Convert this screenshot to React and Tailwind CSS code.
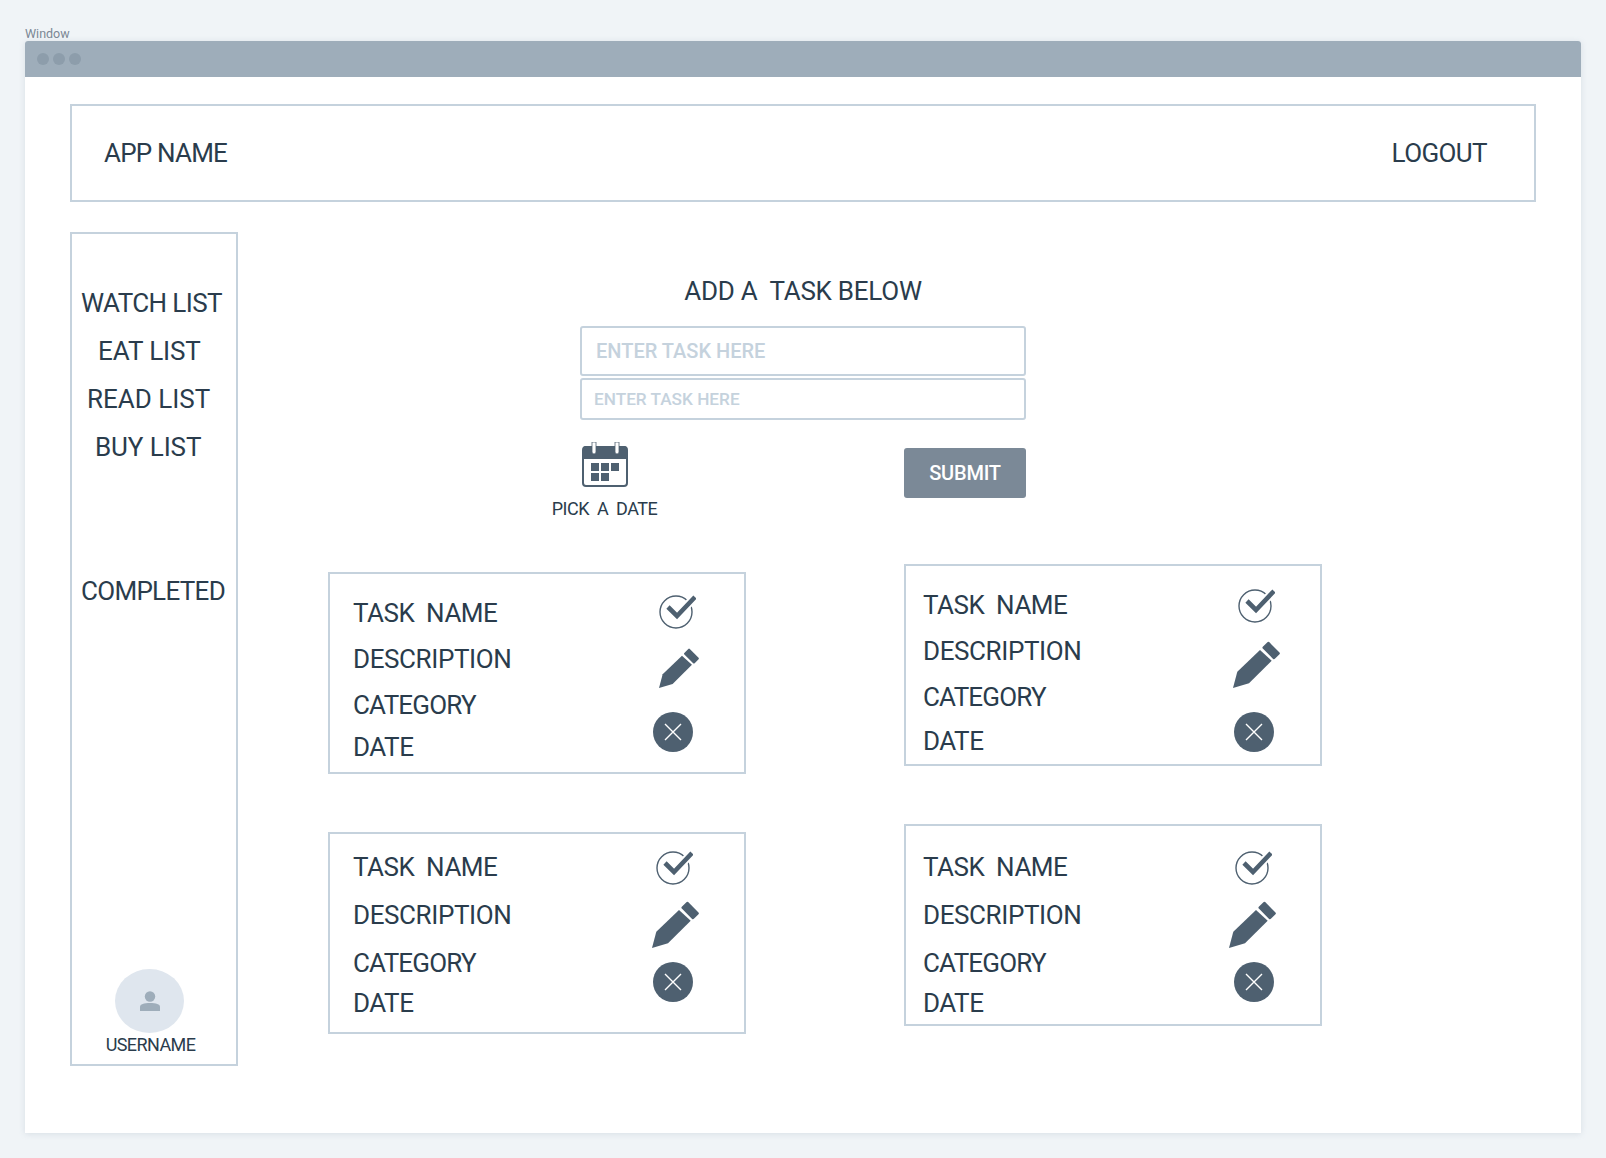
function Check({ className }) {
  return (
    <svg viewBox="0 0 37 34" className={className} fill="none">
      <circle cx="17" cy="17" r="16" stroke="#4e6070" strokeWidth="1.4" />
      <path d="M9 12 L18 21 L36 2" stroke="#fff" strokeWidth="8.5" />
      <path d="M9 12 L18 21 L36 2" stroke="#4e6070" strokeWidth="4.6" />
    </svg>
  );
}

function Pencil({ className }) {
  return (
    <svg viewBox="0 0 47 47" className={className} fill="#4e6070">
      <path d="M0 47 L4.3 30.7 L27 9 L38.7 19.7 L16 42.3 Z" />
      <path d="M35.3 2 L45.6 12.3 L41 17 L30.7 6.7 Z" stroke="#4e6070" strokeWidth="2.5" strokeLinejoin="round" />
    </svg>
  );
}

function Close({ className }) {
  return (
    <svg viewBox="0 0 40 40" className={className}>
      <circle cx="20" cy="20" r="20" fill="#4e6070" />
      <path d="M12 12 L28 28 M28 12 L12 28" stroke="#fff" strokeWidth="1.4" />
    </svg>
  );
}

function Calendar({ className }) {
  return (
    <svg viewBox="0 0 46 45" className={className}>
      <rect x="1" y="5" width="44" height="39" rx="3" fill="#fff" stroke="#4e6070" strokeWidth="2" />
      <path d="M1 17 V7 a3 3 0 0 1 3-3 H42 a3 3 0 0 1 3 3 V17 Z" fill="#4e6070" />
      <path d="M10 0 V10 a2 2 0 0 0 4 0 V0 Z M33 0 V10 a2 2 0 0 0 4 0 V0 Z" fill="#fff" stroke="#4e6070" strokeWidth="0.8" />
      <g fill="#4e6070">
        <rect x="9" y="21" width="8" height="8" />
        <rect x="19" y="21" width="8" height="8" />
        <rect x="29" y="21" width="8" height="8" />
        <rect x="9" y="31" width="8" height="8" />
        <rect x="19" y="31" width="8" height="8" />
      </g>
    </svg>
  );
}

function Card({ textClass, lineMargins, checkClass, pencilClass, closeClass }) {
  const labels = [
    ["TASK  NAME", "tracking-[-0.5px]"],
    ["DESCRIPTION", "tracking-[-0.4px]"],
    ["CATEGORY", "tracking-[-0.8px]"],
    ["DATE", "tracking-[-0.5px]"],
  ];
  return (
    <div className="flex h-[202px] w-[418px] border-2 border-[#c5d2dd]">
      <div className={`w-[322px] ${textClass}`}>
        {labels.map(([label, tracking], i) => (
          <div key={label} className={`h-[30px] whitespace-pre text-[26px] font-[450] leading-[30px] text-[#2a3c4c] ${tracking} ${lineMargins[i]}`}>
            {label}
          </div>
        ))}
      </div>
      <div className="flex flex-col items-start">
        <Check className={`h-[34px] w-[37px] ${checkClass}`} />
        <Pencil className={pencilClass} />
        <Close className={`h-[40px] w-[40px] ${closeClass}`} />
      </div>
    </div>
  );
}

export default function App() {
  return (
    <div className="h-[1158px] overflow-hidden bg-[#f0f4f7] px-[25px] pt-[27px] font-['Roboto',sans-serif]">
      <div className="h-[14px] text-[12.5px] leading-[14px] text-[#7b8794]">Window</div>
      <div className="h-[1092px] w-[1556px] rounded-t-[3px] bg-white shadow-[0_1px_6px_rgba(120,140,160,0.2)]">
        <div className="flex h-[36px] items-center gap-[4px] rounded-t-[3px] bg-[#9eadba] pl-[12px]">
          <span className="h-[12px] w-[12px] rounded-full bg-[#8d9dab]" />
          <span className="h-[12px] w-[12px] rounded-full bg-[#8d9dab]" />
          <span className="h-[12px] w-[12px] rounded-full bg-[#8d9dab]" />
        </div>
        <div className="px-[45px] pt-[27px]">
          <header className="flex h-[98px] w-[1466px] items-center justify-between border-2 border-[#c5d2dd] pl-[32px] pr-[47px] text-[26px] font-[450] text-[#2a3c4c]">
            <span className="tracking-[-0.8px]">APP NAME</span>
            <span className="tracking-[-0.6px]">LOGOUT</span>
          </header>
          <div className="mt-[30px] flex">
            <aside className="flex h-[834px] w-[168px] flex-col border-2 border-[#c5d2dd] pt-[45px] text-[26px] font-[450] leading-[48px] text-[#2a3c4c]">
              <div className="ml-[9px] tracking-[-0.6px]">WATCH LIST</div>
              <div className="ml-[26px] tracking-[-0.1px]">EAT LIST</div>
              <div className="ml-[15px] tracking-[0px]">READ LIST</div>
              <div className="ml-[23px] tracking-[-0.1px]">BUY LIST</div>
              <div className="ml-[9px] mt-[96px] tracking-[-0.7px]">COMPLETED</div>
              <div className="mt-auto flex flex-col items-center pb-[7px] pr-[9px]">
                <div className="flex h-[64px] w-[69px] items-center justify-center rounded-[50%] bg-[#dfe6ee]">
                  <svg viewBox="0 0 20 20" className="h-[20px] w-[20px]" fill="#9eadba">
                    <circle cx="10" cy="5.5" r="5.2" />
                    <path d="M0 20 V16 C0 13 4 12 10 12 C16 12 20 13 20 16 V20 Z" />
                  </svg>
                </div>
                <div className="ml-[2px] h-[24px] text-[18px] leading-[24px] tracking-[-0.6px]">USERNAME</div>
              </div>
            </aside>
            <main className="ml-[90px] w-[994px]">
              <div className="ml-[252px] w-[446px] pt-[44px]">
                <h1 className="h-[30px] whitespace-pre text-center text-[26px] font-[450] leading-[30px] tracking-[-0.25px] text-[#2a3c4c]">ADD A  TASK BELOW</h1>
                <input
                  placeholder="ENTER TASK HERE"
                  className="mt-[20px] block h-[50px] w-[446px] rounded-[3px] border-2 border-[#c5d2dd] pl-[14px] text-[20px] font-medium outline-none placeholder:text-[#c5d2dd]"
                />
                <input
                  placeholder="ENTER TASK HERE"
                  className="mt-[2px] block h-[42px] w-[446px] rounded-[3px] border-2 border-[#c5d2dd] pl-[12px] text-[17.2px] font-medium outline-none placeholder:text-[#c5d2dd]"
                />
                <div className="-ml-[28px] mt-[22px] flex w-[474px] items-start justify-between">
                  <div className="flex w-[105px] flex-col items-center">
                    <Calendar className="h-[45px] w-[46px]" />
                    <div className="mt-[10px] h-[24px] whitespace-pre text-[18px] leading-[24px] tracking-[-0.5px] text-[#2a3c4c]">PICK  A  DATE</div>
                  </div>
                  <button className="mt-[6px] h-[50px] w-[122px] rounded-[3px] bg-[#7b8997] text-[20px] font-medium tracking-[-0.2px] text-white">SUBMIT</button>
                </div>
              </div>
              <div className="mt-[43px] flex gap-[158px]">
                <div className="flex flex-col gap-[58px] pt-[8px]">
                  <Card
                    textClass="pl-[23px]"
                    lineMargins={["mt-[24px]", "mt-[16px]", "mt-[16px]", "mt-[12px]"]}
                    checkClass="ml-[7px] mt-[21px]"
                    pencilClass="ml-[7px] mt-[19px] h-[40px] w-[40px]"
                    closeClass="ml-[1px] mt-[24px]"
                  />
                  <Card
                    textClass="pl-[23px]"
                    lineMargins={["mt-[18px]", "mt-[18px]", "mt-[18px]", "mt-[10px]"]}
                    checkClass="ml-[4px] mt-[17px]"
                    pencilClass="ml-[0px] mt-[16px] h-[47px] w-[47px]"
                    closeClass="ml-[1px] mt-[14px]"
                  />
                </div>
                <div className="flex flex-col gap-[58px]">
                  <Card
                    textClass="pl-[17px]"
                    lineMargins={["mt-[24px]", "mt-[16px]", "mt-[16px]", "mt-[14px]"]}
                    checkClass="ml-[10px] mt-[23px]"
                    pencilClass="ml-[5px] mt-[18px] h-[47px] w-[47px]"
                    closeClass="ml-[6px] mt-[24px]"
                  />
                  <Card
                    textClass="pl-[17px]"
                    lineMargins={["mt-[26px]", "mt-[18px]", "mt-[18px]", "mt-[10px]"]}
                    checkClass="ml-[7px] mt-[25px]"
                    pencilClass="ml-[1px] mt-[16px] h-[47px] w-[47px]"
                    closeClass="ml-[6px] mt-[14px]"
                  />
                </div>
              </div>
            </main>
          </div>
        </div>
      </div>
    </div>
  );
}
